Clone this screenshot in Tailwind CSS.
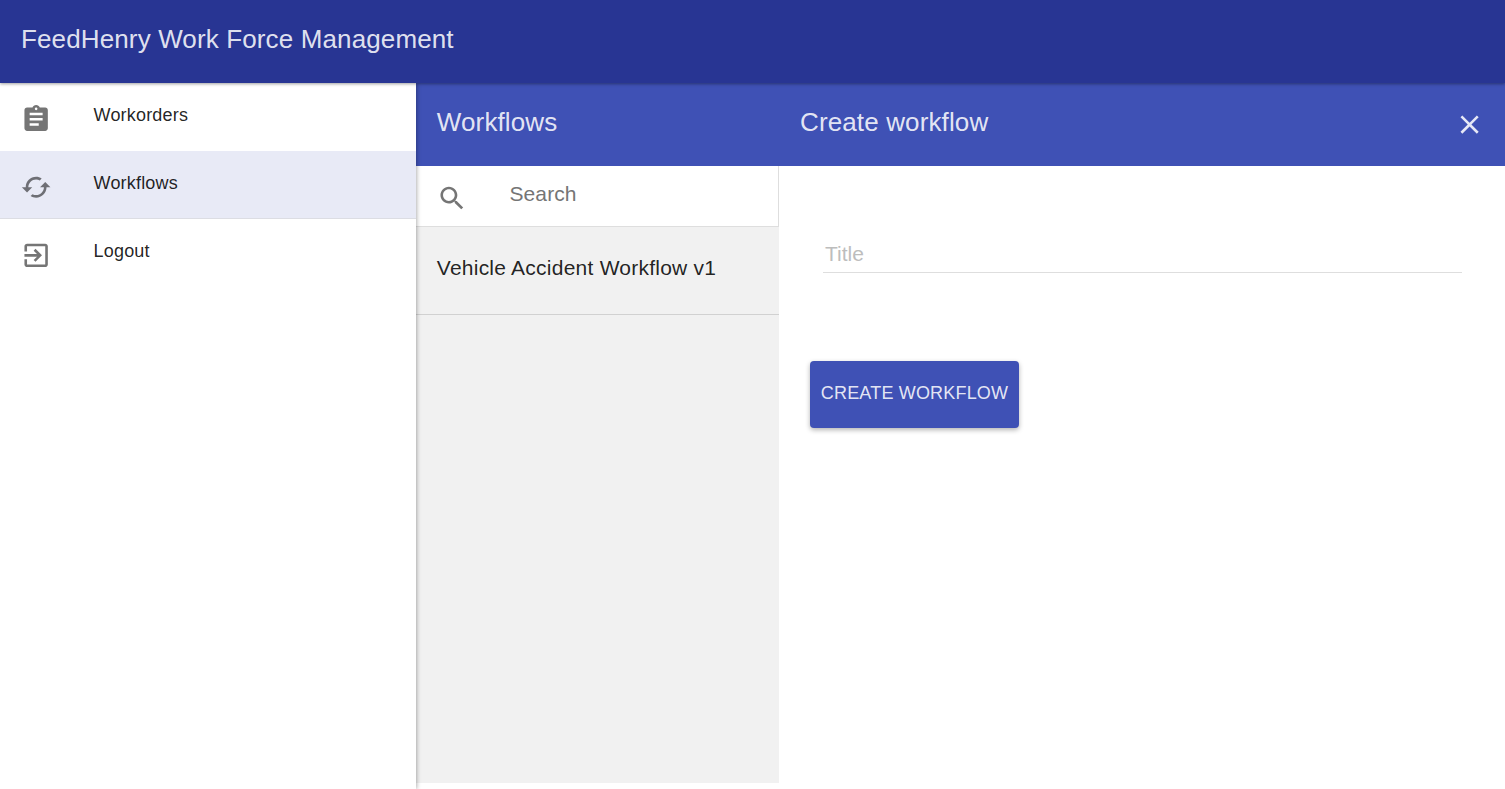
<!DOCTYPE html>
<html lang="en">
<head>
<meta charset="utf-8">
<title>FeedHenry Work Force Management</title>
<script src="https://cdn.jsdelivr.net/npm/@tailwindcss/browser@4"></script>
</head>
<body class="h-screen overflow-hidden bg-white flex flex-col font-['Liberation_Sans',Arial,sans-serif] text-black/87">
  <header class="relative z-20 h-[83px] shrink-0 bg-[#283593] shadow-[0_1px_3px_rgba(0,0,0,0.38)] flex items-center px-[21px] pb-[5px]">
    <h1 class="text-[26px] leading-[34px] tracking-[0.13px] text-white/87">FeedHenry Work Force Management</h1>
  </header>
  <div class="flex flex-1 min-h-0">
    <nav class="relative z-10 w-[416px] shrink-0 bg-white shadow-[1px_0_4px_rgba(0,0,0,0.3)] text-[18px] leading-[24px] tracking-[0.18px]">
      <a class="flex h-[68px] pl-[21px]">
        <svg class="mt-[21px] size-[31.2px] shrink-0" viewBox="0.35 0.25 24 24" fill="#757575"><path d="M19 3h-4.18C14.4 1.84 13.3 1 12 1c-1.3 0-2.4.84-2.82 2H5c-1.1 0-2 .9-2 2v14c0 1.1.9 2 2 2h14c1.1 0 2-.9 2-2V5c0-1.1-.9-2-2-2zm-7 0c.55 0 1 .45 1 1s-.45 1-1 1-1-.45-1-1 .45-1 1-1zm2 14H7v-2h7v2zm3-4H7v-2h10v2zm0-4H7V7h10v2z"/></svg>
        <span class="ml-[41.4px] mt-[20px]">Workorders</span>
      </a>
      <a class="flex h-[68px] pl-[21px] bg-[#e8eaf6] border-b border-[#dcdde3]">
        <svg class="mt-[21px] size-[31.2px] shrink-0" viewBox="0.35 0.25 24 24" fill="#6e6f75"><path d="M19 8l-4 4h3c0 3.31-2.69 6-6 6-1.01 0-1.97-.25-2.8-.7l-1.46 1.46C8.97 19.54 10.43 20 12 20c4.42 0 8-3.58 8-8h3l-4-4zM6 12c0-3.31 2.69-6 6-6 1.01 0 1.97.25 2.8.7l1.46-1.46C15.03 4.46 13.57 4 12 4c-4.42 0-8 3.58-8 8H1l4 4 4-4H6z"/></svg>
        <span class="ml-[41.4px] mt-[20px]">Workflows</span>
      </a>
      <a class="flex h-[68px] pl-[21px]">
        <svg class="mt-[21px] size-[31.2px] shrink-0" viewBox="0.35 0.2 24 24" fill="#757575"><path d="M10.09 15.59L11.5 17l5-5-5-5-1.41 1.41L12.67 11H3v2h9.67l-2.58 2.59zM19 3H5c-1.11 0-2 .9-2 2v4h2V5h14v14H5v-4H3v4c0 1.1.89 2 2 2h14c1.1 0 2-.9 2-2V5c0-1.1-.9-2-2-2z"/></svg>
        <span class="ml-[41.4px] mt-[20px]">Logout</span>
      </a>
    </nav>
    <section class="w-[363px] shrink-0 flex flex-col pb-[6px]">
      <div class="h-[83px] shrink-0 bg-[#3f51b5] flex items-center px-[20.8px] pb-[5px]">
        <h2 class="text-[26px] leading-[34px] tracking-[0.13px] text-white/87">Workflows</h2>
      </div>
      <label class="h-[61px] shrink-0 flex border-r border-b border-[#dedede] pl-[21px]">
        <svg class="mt-[17px] size-[31.2px] shrink-0" viewBox="0.35 0.2 24 24" fill="#757575"><path d="M15.5 14h-.79l-.28-.27C15.41 12.59 16 11.11 16 9.5 16 5.91 13.09 3 9.5 3S3 5.91 3 9.5 5.91 16 9.5 16c1.61 0 3.09-.59 4.23-1.57l.27.28v.79l5 4.99L20.49 19l-4.99-5zm-6 0C7.01 14 5 11.99 5 9.5S7.01 5 9.5 5 14 7.01 14 9.5 11.99 14 9.5 14z"/></svg>
        <span class="ml-[41.3px] mt-[14px] text-[21px] leading-[28px] text-[#757575] tracking-[0.1px]">Search</span>
      </label>
      <div class="flex-1 bg-[#f1f1f1]">
        <div class="h-[88px] border-b border-[#d1d1d1] pl-[20.8px] pt-[27px] text-[21px] leading-[28px] tracking-[0.24px]">Vehicle Accident Workflow v1</div>
      </div>
    </section>
    <main class="flex-1 flex flex-col">
      <div class="h-[83px] shrink-0 bg-[#3f51b5] flex items-center justify-between pl-[21px] pr-[20px]">
        <h2 class="mb-[5px] text-[26px] leading-[34px] tracking-[0.13px] text-white/87">Create workflow</h2>
        <svg class="size-[31.2px]" viewBox="0 0 24 24" fill="#ffffff" fill-opacity="0.87"><path d="M19 6.41L17.59 5 12 10.59 6.41 5 5 6.41 10.59 12 5 17.59 6.41 19 12 13.41 17.59 19 19 17.59 13.41 12z"/></svg>
      </div>
      <div class="ml-[44px] mr-[43px] mt-[73px] h-[34px] border-b border-[#dedede] pl-[2px] text-[21px] leading-[29px] text-[#bdbdbd]">Title</div>
      <button class="ml-[31px] mt-[88px] h-[67px] w-[209px] rounded-[4px] bg-[#3f51b5] pb-[2px] shadow-[0_2px_5px_rgba(0,0,0,0.3)] text-[18px] tracking-[0.18px] text-white/87">CREATE WORKFLOW</button>
    </main>
  </div>
</body>
</html>
